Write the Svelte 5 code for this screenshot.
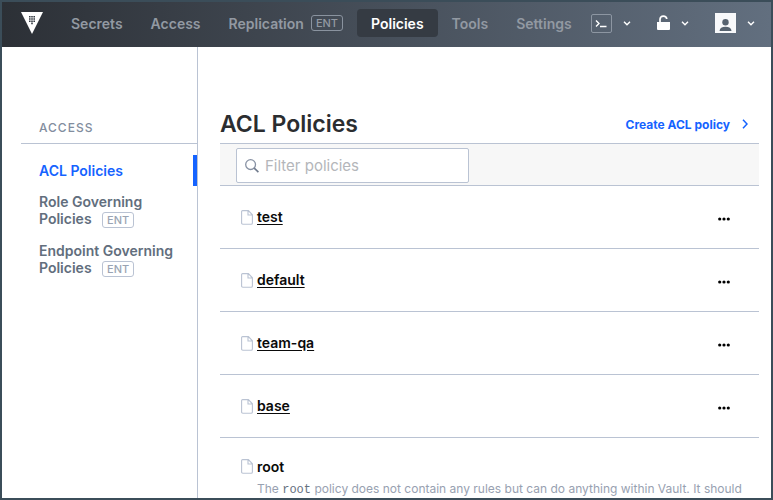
<script>
  const policies = ['test', 'default', 'team-qa', 'base'];
  const navItems = [
    { label: 'Secrets' },
    { label: 'Access' },
    { label: 'Replication', ent: true },
    { label: 'Policies', active: true },
    { label: 'Tools' },
    { label: 'Settings' }
  ];
  const sideItems = [
    { label: 'ACL Policies', active: true },
    { label: 'Role Governing Policies', ent: true },
    { label: 'Endpoint Governing Policies', ent: true }
  ];
  let filter = $state('');
  const shown = $derived(policies.filter((p) => p.includes(filter)));
</script>

{#snippet chevron()}
  <svg viewBox="0 0 8 8" width="8" height="8" aria-hidden="true">
    <path d="M1 2.8 L4 5.8 L7 2.8" fill="none" stroke="#fff" stroke-width="1.4" />
  </svg>
{/snippet}

{#snippet fileIcon()}
  <svg viewBox="0 0 12 15" width="12" height="15" aria-hidden="true">
    <path d="M1.6 .6 H7.4 L11.4 4.8 V13 Q11.4 14.3 10.1 14.3 H1.9 Q.6 14.3 .6 13 V1.6 Q.6 .6 1.6 .6 Z M7 .8 V5 H11.2" fill="none" stroke="#bac3d3" stroke-width="1.1" />
  </svg>
{/snippet}

<div class="frame">
  <header>
    <a class="logo" href="#home" aria-label="Vault">
      <svg viewBox="0 0 22 22" width="22" height="22" aria-hidden="true">
        <path d="M0 0 H22 L11 22 Z" fill="#fff" />
        <path d="M8 4h1.6v1.6H8zM10.2 4h1.6v1.6h-1.6zM12.4 4H14v1.6h-1.6zM8 6.2h1.6v1.6H8zM10.2 6.2h1.6v1.6h-1.6zM12.4 6.2H14v1.6h-1.6zM8 8.4h1.6V10H8zM10.2 8.4h1.6V10h-1.6zM12.4 8.4H14V10h-1.6zM10.2 10.6h1.6v1.6h-1.6z" fill="#343a42" />
      </svg>
    </a>
    <nav>
      {#each navItems as item}
        <a href="#{item.label.toLowerCase()}" class:active={item.active}>
          {item.label}{#if item.ent}<span class="ent">ENT</span>{/if}
        </a>
      {/each}
    </nav>
    <div class="tools">
      <button aria-label="Console">
        <svg viewBox="0 0 21 19" width="21" height="19" aria-hidden="true">
          <rect x=".5" y=".5" width="20" height="18" rx="1.5" fill="none" stroke="#8d96a2" />
          <path d="M5 6.5 L8 9.5 L5 12.5 M9 12.5 H15.5" fill="none" stroke="#fff" stroke-width="1.4" />
        </svg>
        {@render chevron()}
      </button>
      <button aria-label="Seal status">
        <svg viewBox="0 0 13 16" width="13" height="16" aria-hidden="true">
          <path d="M0 7 H13 V14 Q13 15 12 15 H1 Q0 15 0 14 Z" fill="#fff" />
          <path d="M3 7.5 V4.4 Q3 1.2 6.4 1.2 Q9.4 1.2 9.8 4" fill="none" stroke="#fff" stroke-width="1.7" />
        </svg>
        {@render chevron()}
      </button>
      <button aria-label="User menu">
        <svg viewBox="0 0 21 20" width="21" height="20" aria-hidden="true">
          <path d="M0 0 H21 V20 H0 Z" fill="#f7f8fa" />
          <circle cx="10.5" cy="9.2" r="3.2" fill="#56626f" />
          <path d="M4.5 18 Q5 13.8 10.5 13.8 Q16 13.8 16.5 18 Z" fill="#56626f" />
        </svg>
        {@render chevron()}
      </button>
    </div>
  </header>

  <div class="body">
    <aside>
      <h2>Access</h2>
      <ul>
        {#each sideItems as item}
          <li>
            <a href="#{item.label.split(' ')[0].toLowerCase()}" class:active={item.active}>
              {item.label}
              {#if item.ent}<span class="ent">ENT</span>{/if}
            </a>
          </li>
        {/each}
      </ul>
    </aside>

    <main>
      <div class="heading">
        <h1>ACL Policies</h1>
        <a href="#create">
          Create ACL policy
          <svg viewBox="0 0 6 10" width="6" height="10" aria-hidden="true">
            <path d="M1 .8 L5 5 L1 9.2" fill="none" stroke="#1563ff" stroke-width="1.5" />
          </svg>
        </a>
      </div>
      <div class="toolbar">
        <label>
          <svg viewBox="0 0 14 14" width="14" height="14" aria-hidden="true">
            <circle cx="5.6" cy="5.6" r="4.9" fill="none" stroke="#8791a3" stroke-width="1.3" />
            <path d="M9.2 9.2 L13.4 13.2" stroke="#6f7a8c" stroke-width="1.6" />
          </svg>
          <input type="text" placeholder="Filter policies" aria-label="Filter policies" bind:value={filter} />
        </label>
      </div>
      {#each shown as policy}
        <div class="row">
          {@render fileIcon()}
          <a href="#policy-{policy}">{policy}</a>
          <button aria-label="More options for {policy}">
            <svg viewBox="0 0 12 4" width="12" height="4" aria-hidden="true">
              <circle cx="1.7" cy="2" r="1.6" /><circle cx="6" cy="2" r="1.6" /><circle cx="10.3" cy="2" r="1.6" />
            </svg>
          </button>
        </div>
      {/each}
      <div class="root">
        {@render fileIcon()}
        <div>
          <strong>root</strong>
          <p>The <code>root</code> policy does not contain any rules but can do anything within Vault. It should</p>
        </div>
      </div>
    </main>
  </div>
</div>

<style>
  :global(body) {
    margin: 0;
  }
  .frame {
    box-sizing: border-box;
    height: 100vh;
    overflow: hidden;
    display: flex;
    flex-direction: column;
    border: 2px solid #3b4d59;
    background: #fff;
    font: 14px/17px Inter, "Liberation Sans", sans-serif;
    color: #0a0a0a;
  }
  a {
    color: inherit;
    text-decoration: none;
  }
  svg {
    display: block;
    flex: none;
  }
  button {
    display: flex;
    align-items: center;
    padding: 0;
    border: 0;
    background: none;
    cursor: pointer;
  }
  header {
    flex: none;
    display: flex;
    align-items: center;
    height: 45px;
    padding: 0 16px 3px 19px;
    box-sizing: border-box;
    background: linear-gradient(90deg, #2c3036, #626f7f);
  }
  .logo {
    margin-right: 14px;
  }
  nav {
    display: flex;
    font-weight: 600;
    color: #9299a2;
  }
  nav a {
    display: flex;
    align-items: center;
    height: 28px;
    padding: 0 14px;
    border-radius: 4px;
    white-space: nowrap;
  }
  nav a.active {
    color: #fff;
    background: #353b43;
  }
  .ent {
    display: inline-block;
    box-sizing: border-box;
    height: 16px;
    margin-left: 7px;
    padding: 0 4px;
    border: 1px solid #8a939f;
    border-radius: 3px;
    font-size: 11px;
    line-height: 14px;
    font-weight: 500;
  }
  .tools {
    display: flex;
    align-items: center;
    margin-left: auto;
    gap: 26px;
  }
  .tools button {
    gap: 11px;
  }
  .body {
    flex: 1;
    min-height: 0;
    display: flex;
  }
  aside {
    flex: none;
    box-sizing: border-box;
    width: 196px;
    padding: 72px 0 0 19px;
    border-right: 1px solid #bac3d3;
    color: #626e7d;
    font-weight: 600;
  }
  h2 {
    margin: 0 0 11px;
    padding: 0 0 7px 18px;
    border-bottom: 1px solid #bac3d3;
    font-size: 12px;
    line-height: 17px;
    font-weight: 500;
    letter-spacing: 1px;
    text-transform: uppercase;
    color: #828d9e;
  }
  ul {
    margin: 0;
    padding: 0;
    list-style: none;
  }
  aside a {
    display: block;
    padding: 7px 16px 7px 18px;
    border-right: 4px solid transparent;
  }
  aside a.active {
    color: #1563ff;
    border-color: #1563ff;
  }
  aside .ent {
    border-color: #bac3d3;
    color: #9aa4b3;
    vertical-align: middle;
  }
  main {
    flex: 1;
    min-width: 0;
    padding: 60px 12px 0 22px;
  }
  .heading {
    display: flex;
    align-items: center;
    justify-content: space-between;
    padding-bottom: 2px;
  }
  h1 {
    margin: 0;
    font-size: 23px;
    line-height: 34px;
    font-weight: 600;
    color: #2b2d30;
  }
  .heading a {
    display: flex;
    align-items: center;
    gap: 12px;
    padding-right: 11px;
    font-size: 12px;
    font-weight: 700;
    color: #1563ff;
  }
  .toolbar {
    padding: 4px 16px 2px;
    border: solid #bac3d3;
    border-width: 1px 0;
    background: #f7f7f7;
  }
  .toolbar label {
    display: flex;
    align-items: center;
    box-sizing: border-box;
    width: 233px;
    height: 35px;
    padding: 0 8px;
    gap: 6px;
    border: 1px solid #bac3d3;
    border-radius: 2px;
    background: #fff;
  }
  input {
    flex: 1;
    min-width: 0;
    padding: 0;
    border: 0;
    outline: 0;
    background: none;
    font: 15px/24px Inter, "Liberation Sans", sans-serif;
    color: #0a0a0a;
  }
  input::placeholder {
    color: #b4b6ba;
    opacity: 1;
  }
  .row {
    display: flex;
    align-items: center;
    height: 62px;
    padding: 0 29px 0 21px;
    gap: 4px;
    border-bottom: 1px solid #bac3d3;
    font-weight: 600;
  }
  .row a {
    padding-bottom: 2px;
    text-decoration: underline;
    text-underline-offset: 2px;
  }
  .row button {
    box-sizing: border-box;
    height: 24px;
    padding-top: 4px;
    margin-left: auto;
  }
  .root {
    display: flex;
    padding: 21px 12px 0 21px;
    gap: 4px;
  }
  strong {
    display: block;
    line-height: 15px;
    font-weight: 600;
  }
  p {
    margin: 6px 0 0;
    font-size: 12px;
    line-height: 18px;
    color: #98a1b1;
  }
  code {
    font: 12px/16px "Liberation Mono", monospace;
    color: #66717f;
  }
</style>
